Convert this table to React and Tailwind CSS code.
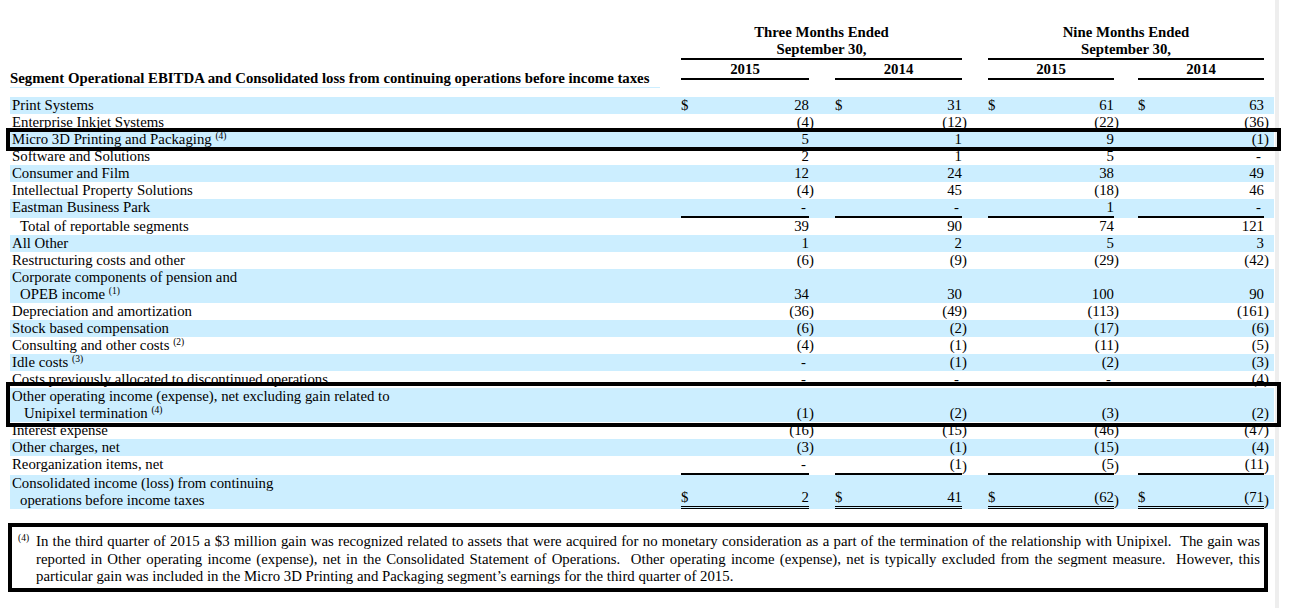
const rows = [
  { label: ['Print Systems'], v: ['28', '31', '61', '63'], dollar: true },
  { label: ['Enterprise Inkjet Systems'], v: ['(4)', '(12)', '(22)', '(36)'] },
  { label: ['Micro 3D Printing and Packaging'], note: '(4)', v: ['5', '1', '9', '(1)'] },
  { label: ['Software and Solutions'], v: ['2', '1', '5', '-'] },
  { label: ['Consumer and Film'], v: ['12', '24', '38', '49'] },
  { label: ['Intellectual Property Solutions'], v: ['(4)', '45', '(18)', '46'] },
  { label: ['Eastman Business Park'], v: ['-', '-', '1', '-'], rule: 'single' },
  { label: ['Total of reportable segments'], indent: true, v: ['39', '90', '74', '121'] },
  { label: ['All Other'], v: ['1', '2', '5', '3'] },
  { label: ['Restructuring costs and other'], v: ['(6)', '(9)', '(29)', '(42)'] },
  { label: ['Corporate components of pension and', 'OPEB income'], note: '(1)', v: ['34', '30', '100', '90'] },
  { label: ['Depreciation and amortization'], v: ['(36)', '(49)', '(113)', '(161)'] },
  { label: ['Stock based compensation'], v: ['(6)', '(2)', '(17)', '(6)'] },
  { label: ['Consulting and other costs'], note: '(2)', v: ['(4)', '(1)', '(11)', '(5)'] },
  { label: ['Idle costs'], note: '(3)', v: ['-', '(1)', '(2)', '(3)'] },
  { label: ['Costs previously allocated to discontinued operations'], v: ['-', '-', '-', '(4)'] },
  { label: ['Other operating income (expense), net excluding gain related to', 'Unipixel termination'], note: '(4)', wide: true, v: ['(1)', '(2)', '(3)', '(2)'] },
  { label: ['Interest expense'], v: ['(16)', '(15)', '(46)', '(47)'] },
  { label: ['Other charges, net'], v: ['(3)', '(1)', '(15)', '(4)'] },
  { label: ['Reorganization items, net'], v: ['-', '(1)', '(5)', '(11)'], rule: 'single' },
  { label: ['Consolidated income (loss) from continuing', 'operations before income taxes'], v: ['2', '41', '(62)', '(71)'], dollar: true, rule: 'double' },
]

function Sup({ children }) {
  return <sup className="text-[9.5px]">{children}</sup>
}

function Label({ row }) {
  const [first, second] = row.label
  return (
    <div className={`pl-[2px] whitespace-nowrap ${row.indent ? 'pl-[10px]' : ''}`}>
      <div>
        {first}
        {!second && row.note && <> <Sup>{row.note}</Sup></>}
      </div>
      {second && (
        <div className={row.wide ? 'pl-[12px]' : 'pl-[8px]'}>
          {second}
          {row.note && <> <Sup>{row.note}</Sup></>}
        </div>
      )}
    </div>
  )
}

function Amount({ v, dollar, rule }) {
  const neg = v.startsWith('(')
  const shown = neg ? v.slice(0, -1) : v
  const line = rule === 'single' ? 'border-b-2 border-black' : rule === 'double' ? 'border-b-[3px] border-double border-black' : ''
  return (
    <>
      <div className={`flex items-end justify-between ${line}`}>
        <span>{dollar ? '$' : ''}</span>
        <span className={v === '-' ? 'pr-[3px]' : ''}>{shown}</span>
      </div>
      <div className="flex items-end">{neg ? ')' : ''}</div>
    </>
  )
}

export default function App() {
  return (
    <div className="relative w-[1306px] h-[608px] overflow-hidden bg-white font-['Liberation_Serif',serif] text-[14.8px] leading-[17px] text-black">
      <div className="w-[1279px] h-full border-r-4 border-[#eeeeee]">
        {/* column headings */}
        <div className="flex items-start ml-[10px] w-[1264px] pt-[24px]">
          <div className="w-[671px] h-[64px] flex items-end">
            <div className="w-[650px] border-b border-[#cceeff] font-bold whitespace-nowrap">
              Segment Operational EBITDA and Consolidated loss from continuing operations before income taxes
            </div>
          </div>
          <div className="grid grid-cols-[128px_26px_127px_26px_126px_24px_126px_10px] content-start items-start font-bold text-center">
            <div className="col-span-3 border-b-2 border-black">
              Three Months Ended<br />September 30,
            </div>
            <div />
            <div className="col-span-3 border-b-2 border-black">
              Nine Months Ended<br />September 30,
            </div>
            <div />
            <div className="leading-[18px] border-b-2 border-black">2015</div>
            <div />
            <div className="leading-[18px] border-b-2 border-black">2014</div>
            <div />
            <div className="leading-[18px] border-b-2 border-black">2015</div>
            <div />
            <div className="leading-[18px] border-b-2 border-black">2014</div>
            <div />
          </div>
        </div>

        {/* body */}
        <div className="relative ml-[10px] w-[1264px] mt-[9px]">
          {rows.map((row, i) => (
            <div
              key={i}
              className={`grid grid-cols-[671px_128px_26px_127px_26px_126px_24px_126px_10px] ${i % 2 === 0 ? 'bg-[#cceeff]' : 'bg-white'}`}
            >
              <Label row={row} />
              {row.v.map((v, j) => (
                <Amount key={j} v={v} dollar={row.dollar} rule={row.rule} />
              ))}
            </div>
          ))}

          {/* highlight boxes drawn over the table */}
          <div className="absolute left-[-4px] top-[31px] w-[1275px] h-[23px] border-4 border-black" />
          <div className="absolute left-[-4px] top-[285px] w-[1275px] h-[45px] border-4 border-black" />
        </div>

        {/* footnote */}
        <div className="mt-[14px] ml-[8px] w-[1260px] border-4 border-black pt-[6px] pb-[2px] pl-[6px] pr-[4px] flex">
          <div className="w-[18px] shrink-0"><Sup>(4)</Sup></div>
          <div className="flex-1 leading-[17.5px]">
            <div className="text-justify [text-align-last:justify] whitespace-nowrap">
              In the third quarter of 2015 a $3 million gain was recognized related to assets that were acquired for no monetary consideration as a part of the termination of the relationship with Unipixel.{'\u00a0 '}The gain was
            </div>
            <div className="text-justify [text-align-last:justify] whitespace-nowrap">
              reported in Other operating income (expense), net in the Consolidated Statement of Operations.{'\u00a0 '}Other operating income (expense), net is typically excluded from the segment measure.{'\u00a0 '}However, this
            </div>
            <div>
              particular gain was included in the Micro 3D Printing and Packaging segment’s earnings for the third quarter of 2015.
            </div>
          </div>
        </div>
      </div>
    </div>
  )
}
